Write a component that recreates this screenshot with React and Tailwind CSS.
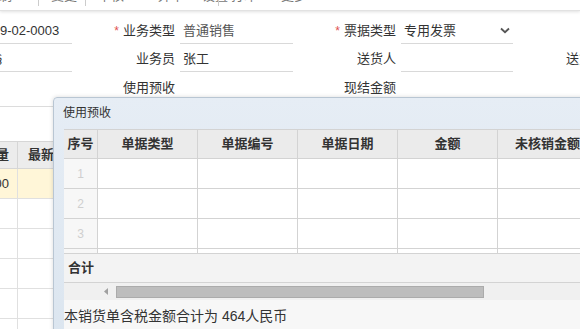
import React from "react";

const font = { fontFamily: '"Liberation Sans", "Noto Sans CJK SC", sans-serif' };

const toolItems = [
  { label: "复制", w: "w-[52px]", sep: true, first: true },
  { label: "变更", w: "w-[46px]", sep: true, pl: "pl-[12px]" },
  { label: "审核", w: "w-[62px]", pl: "pl-[12px]" },
  { label: "弃审", w: "w-[54px]", pl: "pl-[10px]" },
  { label: "设置", w: "w-[16px]", sep: true },
  { label: "打印", w: "w-[52px]", pl: "pl-[12px]" },
  { label: "更多", w: "w-[60px]", pl: "pl-[10px]" },
];

const FormInput = ({ w, value, muted, select }) => (
  <div className={`${w} shrink-0 h-[26px] border-b border-[#d9d9d9] flex items-center justify-between text-[13px] ${muted ? "text-[#555]" : "text-[#333]"}`}>
    <span className="pl-[3px] whitespace-nowrap">{value}</span>
    {select && (
      <svg width="10" height="7" viewBox="0 0 10 7" className="mr-[3px]">
        <path d="M1 1.5 L5 5.2 L9 1.5" fill="none" stroke="#555" strokeWidth="1.8" />
      </svg>
    )}
  </div>
);

const Label = ({ w, text, req }) => (
  <div className={`${w} shrink-0 h-[26px] flex items-center justify-end pr-[5px] text-[13px] text-[#333] whitespace-nowrap`}>
    {req && <span className="text-[#e05050] mr-[4px] text-[12px]">*</span>}
    {text}
  </div>
);

const cols = [
  { t: "序号", w: "w-[34px]" },
  { t: "单据类型", w: "w-[100px]" },
  { t: "单据编号", w: "w-[100px]" },
  { t: "单据日期", w: "w-[100px]" },
  { t: "金额", w: "w-[100px]" },
  { t: "未核销金额", w: "w-[100px]" },
];

export default function App() {
  return (
    <div className="relative w-[580px] h-[329px] overflow-hidden bg-white" style={font}>
      {/* toolbar, mostly scrolled off */}
      <div className="h-[11px] overflow-hidden bg-white border-b border-[#e2e2e2] shadow-[0_1px_3px_rgba(0,0,0,0.12)] relative z-10">
        <div className="flex items-center h-[20px] -mt-[14px] text-[13px] text-[#777]">
          {toolItems.map((it, i) => (
            <React.Fragment key={i}>
              <div className={`${it.w} ${it.pl || ""} shrink-0 whitespace-nowrap ${it.first ? "-ml-[14px]" : ""}`}>{it.label}</div>
              {it.sep && <div className="w-px h-[20px] bg-[#ccc] shrink-0" />}
            </React.Fragment>
          ))}
        </div>
      </div>

      {/* form */}
      <div className="pt-[7px]">
        <div className="flex items-start h-[28px]">
          <FormInput w="w-[72px]" value={<span className="-ml-[3px]">9-02-0003</span>} />
          <Label w="w-[108px]" text="业务类型" req />
          <FormInput w="w-[113px]" value="普通销售" muted />
          <Label w="w-[108px]" text="票据类型" req />
          <FormInput w="w-[112px]" value="专用发票" select />
        </div>
        <div className="flex items-start h-[29px]">
          <FormInput w="w-[72px]" value={<span className="-ml-[8px]">§</span>} />
          <Label w="w-[108px]" text="业务员" />
          <FormInput w="w-[113px]" value="张工" />
          <Label w="w-[108px]" text="送货人" />
          <FormInput w="w-[112px]" value="" />
          <Label w="w-[110px]" text="送货日期" />
        </div>
        <div className="flex items-start h-[27px]">
          <div className="w-[72px] shrink-0" />
          <Label w="w-[108px]" text="使用预收" />
          <div className="w-[113px] shrink-0" />
          <Label w="w-[108px]" text="现结金额" />
        </div>
      </div>

      {/* background grid */}
      <div className="mt-[4px] border-t border-[#dcdcdc] h-[35px]" />
      <div className="text-[13px] text-[#333]">
        <div className="flex h-[28px] bg-[#ececec] border-y border-[#d6d6d6] font-bold">
          <div className="w-[60px] -ml-[42px] shrink-0 border-r border-[#d6d6d6] flex items-center justify-end pr-[8px]">数量</div>
          <div className="w-[40px] shrink-0 overflow-hidden whitespace-nowrap flex items-center pl-[10px]">最新</div>
        </div>
        {[0, 1, 2, 3, 4, 5].map((r) => (
          <div key={r} className={`flex h-[30px] border-b border-[#e0e0e0] ${r === 0 ? "bg-[#fff6d8]" : ""}`}>
            <div className="w-[60px] -ml-[42px] shrink-0 border-r border-[#e0e0e0] flex items-center justify-end pr-[8px]">{r === 0 ? "1.00" : ""}</div>
            <div className="w-[120px] shrink-0" />
          </div>
        ))}
      </div>

      {/* dialog */}
      <div className="absolute left-[53px] top-[97px] w-[580px] h-[250px] rounded-tl-[4px] border border-[#b9c6d3] bg-gradient-to-b from-[#e6edf5] to-[#dbe5ef] shadow-[0_0_4px_rgba(0,0,0,0.15)] z-20 flex flex-col">
        <div className="h-[30px] flex items-center pl-[9px] text-[12px] text-[#333]">使用预收</div>
        <div className="pl-[10px] pt-[1px] flex-1 flex flex-col">
          <div className="flex-1 bg-[#f7f7f7] flex flex-col text-[13px] text-[#333]">
            <div className="flex h-[30px] bg-[#ebebeb] border-y border-[#d3d3d3] font-bold">
              {cols.map((c) => (
                <div key={c.t} className={`${c.w} shrink-0 border-r border-[#d3d3d3] flex items-center justify-center whitespace-nowrap`}>{c.t}</div>
              ))}
            </div>
            {["1", "2", "3", ""].map((n, i) => (
              <div key={i} className={`flex ${i === 3 ? "h-[5px]" : "h-[30px]"} bg-white border-b border-[#d3d3d3]`}>
                {cols.map((c, j) => (
                  <div key={c.t} className={`${c.w} shrink-0 border-r border-[#d3d3d3] flex items-center justify-center text-[12px] ${j === 0 ? "bg-[#f7f7f7] text-[#cfcfcf]" : ""}`}>{j === 0 ? n : ""}</div>
                ))}
              </div>
            ))}
            <div className="h-[29px] bg-[#f3f3f3] border-b border-[#d3d3d3] flex items-center pl-[4px] font-bold">合计</div>
            <div className="h-[17px] bg-[#f0f0f0] flex items-center">
              <div className="w-[52px] shrink-0 flex justify-end pr-[8px]">
                <svg width="4" height="7" viewBox="0 0 4 7"><path d="M4 0 L0 3.5 L4 7 Z" fill="#a0a0a0" /></svg>
              </div>
              <div className="w-[368px] shrink-0 h-[12px] bg-[#bdbdbd] border border-[#ababab]" />
            </div>
            <div className="h-[30px] bg-[#f7f7f7] flex items-center pt-[3px] text-[14px] text-[#333] whitespace-nowrap">本销货单含税金额合计为 464人民币</div>
          </div>
        </div>
      </div>
    </div>
  );
}
